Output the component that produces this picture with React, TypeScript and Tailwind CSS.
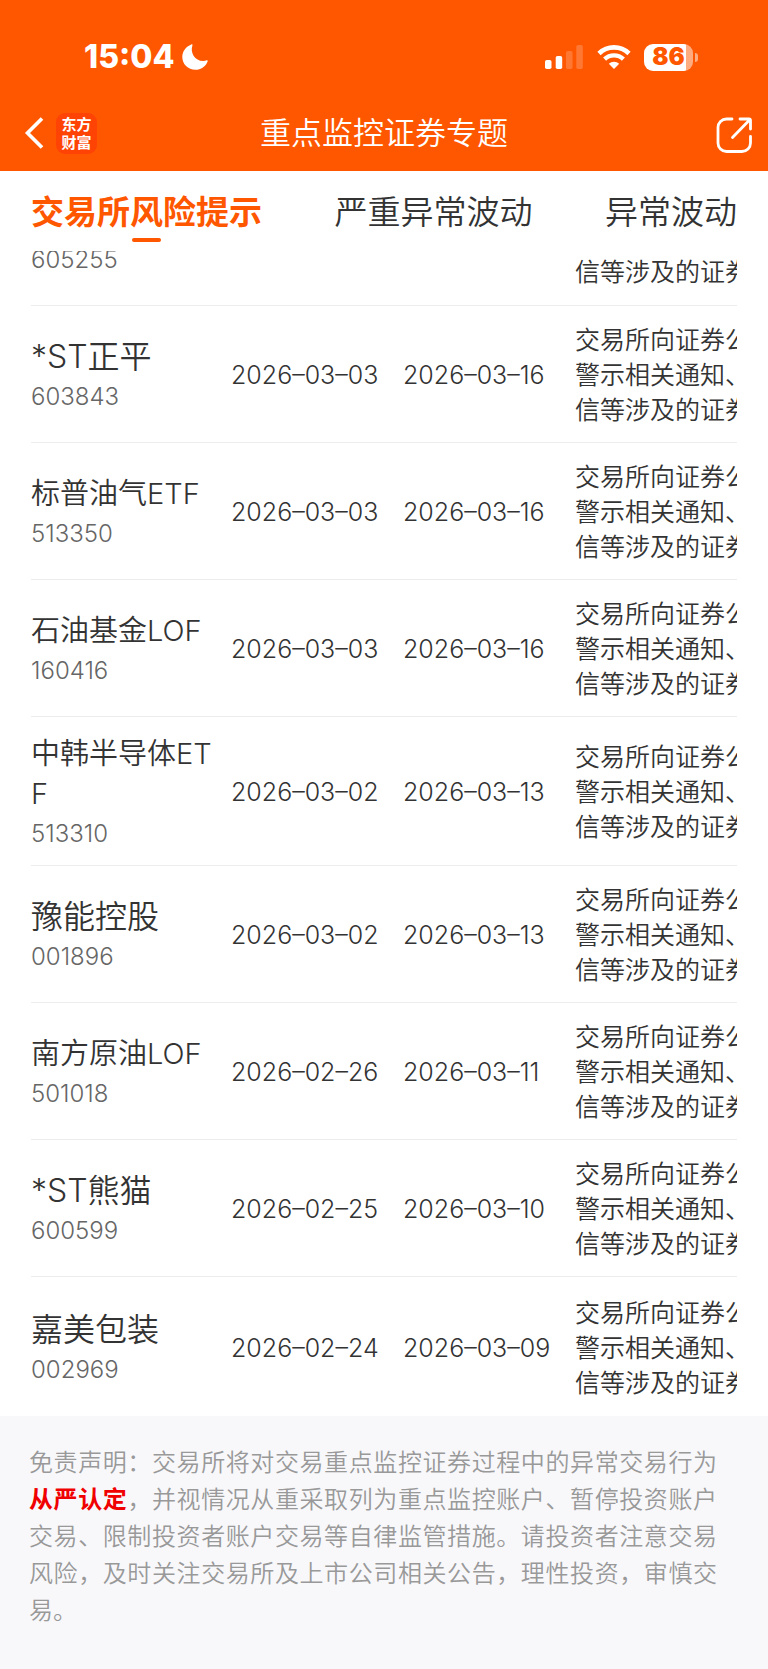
import clsx from "clsx";

interface Security {
  code: string;
  name?: string;
  start?: string;
  end?: string;
}

const TABS = ["交易所风险提示", "严重异常波动", "异常波动"];

const REASON_LINES = ["交易所向证券公", "警示相关通知、", "信等涉及的证券"];

const SECURITIES: Security[] = [
  { code: "605255" },
  { code: "603843", name: "*ST正平", start: "2026–03–03", end: "2026–03–16" },
  { code: "513350", name: "标普油气ETF", start: "2026–03–03", end: "2026–03–16" },
  { code: "160416", name: "石油基金LOF", start: "2026–03–03", end: "2026–03–16" },
  { code: "513310", name: "中韩半导体ETF", start: "2026–03–02", end: "2026–03–13" },
  { code: "001896", name: "豫能控股", start: "2026–03–02", end: "2026–03–13" },
  { code: "501018", name: "南方原油LOF", start: "2026–02–26", end: "2026–03–11" },
  { code: "600599", name: "*ST熊猫", start: "2026–02–25", end: "2026–03–10" },
  { code: "002969", name: "嘉美包装", start: "2026–02–24", end: "2026–03–09" },
];

function StatusBar() {
  return (
    <div className="flex h-[89px] items-end justify-between pt-6 pr-[70px] pb-3 pl-[84px]">
      <div className="flex h-10 items-center gap-2">
        <span className="text-[32px] leading-10 font-extrabold">15:04</span>
        <svg className="h-[26px] w-[26px]" viewBox="0 0 26 26" fill="currentColor">
          <path d="M9.3.4C10.1.1 10.7.7 10.4 1.5 8 8.800 12.800 17.200 21.500 17 22.700 17 23.700 16.700 24.600 16.300 25.300 16 25.900 16.600 25.600 17.400 23.700 22.400 19 25.700 13.400 25.700 6 25.700.3 20 .3 12.900.3 7.300 4 2.400 9.300.4Z" />
        </svg>
      </div>
      <div className="flex h-10 items-center gap-[13px]">
        <svg className="h-[26px] w-[39px]" viewBox="0 0 39 26" fill="currentColor">
          <rect x="0" y="16" width="6.500" height="9" rx="1.800" />
          <rect x="10.700" y="12" width="6.500" height="13" rx="1.800" />
          <rect x="21" y="7" width="6.500" height="18" rx="1.800" opacity="0.2" />
          <rect x="31.300" y="1" width="6.500" height="24" rx="1.800" opacity="0.2" />
        </svg>
        <svg className="h-[26px] w-[34px]" viewBox="0 0 34 26" fill="none" stroke="currentColor">
          <path d="M2 9.500A21.500 21.500 0 0 1 32 9.500" strokeWidth="4.600" />
          <path d="M7.600 15.100A13.600 13.600 0 0 1 26.400 15.100" strokeWidth="4.400" />
          <path d="M17 25 11.800 19.800A7.500 7.500 0 0 1 22.200 19.800Z" fill="currentColor" stroke="none" />
        </svg>
        <div className="flex items-center gap-[2px]">
          <div className="flex h-[27px] w-[49px] items-center justify-center rounded-[9px] bg-linear-to-r from-white from-86% to-white/50 to-86% text-[24px] leading-none font-black text-[#ff5700]">
            86
          </div>
          <div className="h-[9px] w-[3px] rounded-r-full bg-white/50" />
        </div>
      </div>
    </div>
  );
}

function NavBar() {
  return (
    <div className="grid h-[82px] grid-cols-[1fr_auto_1fr] items-center px-4 pt-1.5">
      <div className="flex items-center gap-[11px] pl-2">
        <button aria-label="返回">
          <svg className="h-[34px] w-[21px]" viewBox="0 0 21 34" fill="none" stroke="currentColor" strokeWidth="3.600">
            <path d="M18 2.500 3.500 17 18 31.500" />
          </svg>
        </button>
        <a
          href="#"
          className="flex h-[41px] w-[41px] flex-col items-center justify-center rounded-[9px] bg-[#ff4305] font-['Noto_Sans_CJK_SC',sans-serif] text-[15px] leading-[18px] font-bold"
        >
          <span>东方</span>
          <span>财富</span>
        </a>
      </div>
      <h1 className="text-[31px] leading-10">重点监控证券专题</h1>
      <button aria-label="分享" className="justify-self-end">
        <svg
          className="h-10 w-9"
          viewBox="0 -4 36 40"
          fill="none"
          stroke="currentColor"
          strokeWidth="2.800"
          strokeLinecap="round"
          strokeLinejoin="round"
        >
          <path d="M16 2H10.500A8.500 8.500 0 0 0 2 10.500V26A8.500 8.500 0 0 0 10.500 34.500H26A8.500 8.500 0 0 0 34.500 26V19.500" />
          <path d="M24 2H33A1.500 1.500 0 0 1 34.500 3.500V12M33.500 3 16.500 20.500" />
        </svg>
      </button>
    </div>
  );
}

function SecurityRow({ item }: { item: Security }) {
  // fund names carry a latin suffix and are set one step smaller
  const isFund = /(ETF|LOF)$/.test(item.name ?? "");
  const reasons = item.name ? REASON_LINES : REASON_LINES.slice(-1);
  return (
    <tr
      className={clsx(
        "border-b border-[#ededed] last:h-[140px] last:border-b-0",
        item.code === "513310" ? "h-[149px]" : "h-[137px]"
      )}
    >
      <td className="pt-[7px] pr-4 break-all">
        <div className={clsx("min-h-10 leading-10", isFund ? "text-[29px]" : "text-[32px]")}>{item.name}</div>
        <div className="text-[24px] leading-10 text-[#666]">{item.code}</div>
      </td>
      <td className="pt-1 text-[25px] whitespace-nowrap">{item.start}</td>
      <td className="pt-1 text-[25px] whitespace-nowrap">{item.end}</td>
      <td className={clsx("text-[25px] leading-[35px] whitespace-nowrap", item.name ? "pt-1" : "pt-[72px]")}>
        {reasons.map((line) => (
          <div key={line}>{line}</div>
        ))}
      </td>
    </tr>
  );
}

export default function App() {
  return (
    <div className="min-h-screen bg-[#f8f8fb] font-[Inter,'Noto_Sans_CJK_SC',sans-serif] font-[350] text-[#333]">
      <header className="bg-[#ff5700] text-white">
        <StatusBar />
        <NavBar />
      </header>

      <main className="bg-white">
        <nav className="flex h-20 justify-between px-[31px]">
          {TABS.map((tab, i) => (
            <button
              key={tab}
              className={clsx(
                "flex flex-col items-center pt-[17px] text-[33px] leading-[48px]",
                i === 0 && "font-bold text-[#ff5700]"
              )}
            >
              {tab}
              {i === 0 && <span className="mt-0.5 h-1 w-[29px] rounded-full bg-[#ff5700]" />}
            </button>
          ))}
        </nav>

        <div className="mx-[31px] overflow-hidden">
          {/* list is scrolled part way into its first row */}
          <table className="-mt-[83px] w-full table-fixed border-collapse text-left">
            <colgroup>
              <col className="w-[200px]" />
              <col className="w-[172px]" />
              <col className="w-[172px]" />
              <col />
            </colgroup>
            <tbody>
              {SECURITIES.map((item) => (
                <SecurityRow key={item.code} item={item} />
              ))}
            </tbody>
          </table>
        </div>
      </main>

      <footer className="px-[29px] pt-7 pb-10">
        <p className="max-w-[688px] text-justify text-[24px] leading-[37px] text-[#999]">
          免责声明：交易所将对交易重点监控证券过程中的异常交易行为
          <strong className="font-bold text-[#f00000]">从严认定</strong>
          ，并视情况从重采取列为重点监控账户、暂停投资账户交易、限制投资者账户交易等自律监管措施。请投资者注意交易风险，及时关注交易所及上市公司相关公告，理性投资，审慎交易。
        </p>
      </footer>
    </div>
  );
}
